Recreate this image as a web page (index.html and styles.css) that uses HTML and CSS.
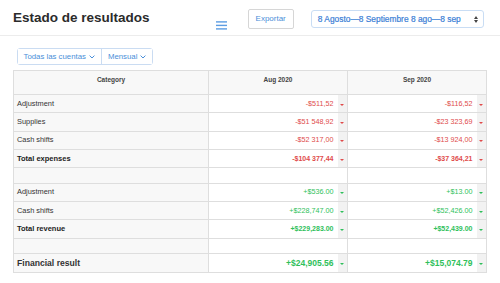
FILE: index.html
```html
<!DOCTYPE html>
<html lang="es">
<head>
<meta charset="utf-8">
<title>Estado de resultados</title>
<link rel="stylesheet" href="styles.css">
</head>
<body>
<header class="topbar">
  <h1 class="title">Estado de resultados</h1>
  <span class="menu" aria-label="menu">
    <svg width="11" height="9" viewBox="0 0 11 9"><rect x="0" y="0.2" width="11" height="1.4" fill="#5c9de3"/><rect x="0" y="3.7" width="11" height="1.4" fill="#5c9de3"/><rect x="0" y="7.2" width="11" height="1.4" fill="#5c9de3"/></svg>
  </span>
  <button class="export">Exportar</button>
  <div class="range">
    <span class="range-text">8 Agosto—8 Septiembre 8 ago—8 sep</span>
    <svg class="updown" width="4" height="7" viewBox="0 0 4 7"><path d="M0 3 L2 0 L4 3 Z M0 4 L2 7 L4 4 Z" fill="#444"/></svg>
  </div>
</header>

<div class="filters">
  <div class="btn-group">
    <button class="fbtn">Todas las cuentas <svg class="chev" width="6" height="4" viewBox="0 0 6 4"><path d="M0.6 0.6 L3 3 L5.4 0.6" fill="none" stroke="#4a8fd9" stroke-width="1"/></svg></button>
    <button class="fbtn">Mensual <svg class="chev" width="6" height="4" viewBox="0 0 6 4"><path d="M0.6 0.6 L3 3 L5.4 0.6" fill="none" stroke="#4a8fd9" stroke-width="1"/></svg></button>
  </div>
</div>

<table class="report">
  <colgroup>
    <col class="c-cat"><col class="c-val"><col class="c-car"><col class="c-val"><col class="c-car">
  </colgroup>
  <thead>
    <tr class="head">
      <th>Category</th>
      <th colspan="2">Aug 2020</th>
      <th colspan="2">Sep 2020</th>
    </tr>
  </thead>
  <tbody>
    <tr class="row">
      <td class="cat">Adjustment</td>
      <td class="val neg">-$511,52</td><td class="car"><i class="tri neg-t"></i></td>
      <td class="val neg">-$116,52</td><td class="car"><i class="tri neg-t"></i></td>
    </tr>
    <tr class="row">
      <td class="cat">Supplies</td>
      <td class="val neg">-$51 548,92</td><td class="car"><i class="tri neg-t"></i></td>
      <td class="val neg">-$23 323,69</td><td class="car"><i class="tri neg-t"></i></td>
    </tr>
    <tr class="row">
      <td class="cat">Cash shifts</td>
      <td class="val neg">-$52 317,00</td><td class="car"><i class="tri neg-t"></i></td>
      <td class="val neg">-$13 924,00</td><td class="car"><i class="tri neg-t"></i></td>
    </tr>
    <tr class="row total">
      <td class="cat">Total expenses</td>
      <td class="val neg">-$104 377,44</td><td class="car"><i class="tri neg-t"></i></td>
      <td class="val neg">-$37 364,21</td><td class="car"><i class="tri neg-t"></i></td>
    </tr>
    <tr class="blank">
      <td class="cat"></td><td colspan="2"></td><td colspan="2"></td>
    </tr>
    <tr class="row">
      <td class="cat">Adjustment</td>
      <td class="val pos">+$536.00</td><td class="car"><i class="tri pos-t"></i></td>
      <td class="val pos">+$13.00</td><td class="car"><i class="tri pos-t"></i></td>
    </tr>
    <tr class="row">
      <td class="cat">Cash shifts</td>
      <td class="val pos">+$228,747.00</td><td class="car"><i class="tri pos-t"></i></td>
      <td class="val pos">+$52,426.00</td><td class="car"><i class="tri pos-t"></i></td>
    </tr>
    <tr class="row total">
      <td class="cat">Total revenue</td>
      <td class="val pos">+$229,283.00</td><td class="car"><i class="tri pos-t"></i></td>
      <td class="val pos">+$52,439.00</td><td class="car"><i class="tri pos-t"></i></td>
    </tr>
    <tr class="blank">
      <td class="cat"></td><td colspan="2"></td><td colspan="2"></td>
    </tr>
    <tr class="result">
      <td class="cat">Financial result</td>
      <td class="val pos">+$24,905.56</td><td class="car"><i class="tri pos-t"></i></td>
      <td class="val pos">+$15,074.79</td><td class="car"><i class="tri pos-t"></i></td>
    </tr>
  </tbody>
</table>
</body>
</html>
```

FILE: styles.css
```css
* { box-sizing: border-box; }

body {
  margin: 0;
  width: 500px;
  height: 283px;
  overflow: hidden;
  background: #fff;
  color: #333;
  font-family: "Liberation Sans", Arial, sans-serif;
}

.topbar {
  display: flex;
  align-items: flex-start;
  height: 36px;
  padding: 9px 16px 0 13px;
  border-bottom: 1px solid #ececec;
}

.title {
  margin: 1px 0 0 0;
  font-size: 13.5px;
  line-height: 15.5px;
  font-weight: bold;
  color: #2b2b2b;
}

.menu {
  display: flex;
  margin: 12px 0 0 66px;
}

.export {
  margin: 0 0 0 21px;
  height: 19.5px;
  padding: 0 7px;
  border: 1px solid #d6d6d6;
  border-radius: 2px;
  background: #fff;
  color: #4a8fd9;
  font-family: "Liberation Sans", Arial, sans-serif;
  font-size: 8px;
}

.range {
  display: flex;
  align-items: center;
  justify-content: space-between;
  margin: 1px 0 0 17px;
  width: 173px;
  height: 18px;
  padding: 0 5px 0 6px;
  border: 1px solid #c9ddf4;
  border-radius: 3px;
  background: #fff;
}

.range-text {
  font-size: 8.4px;
  color: #3b80d6;
  white-space: nowrap;
  -webkit-text-stroke: 0.2px #3b80d6;
}

.updown { flex: none; }

.filters {
  padding: 9px 0 0 16.5px;
  height: 34px;
}

.btn-group {
  display: inline-flex;
  height: 17px;
  border: 1px solid #cadcf2;
  border-radius: 3px;
}

.fbtn {
  display: flex;
  align-items: center;
  gap: 3px;
  padding: 0 6px;
  border: none;
  background: #fff;
  color: #4a8fd9;
  font-family: "Liberation Sans", Arial, sans-serif;
  font-size: 7.8px;
}

.fbtn + .fbtn {
  border-left: 1px solid #cadcf2;
}

.chev { margin-top: 1px; }

.report {
  margin-left: 13px;
  width: 473px;
  border-collapse: collapse;
  table-layout: fixed;
}

.c-cat { width: 195px; }
.c-val { width: 129px; }
.c-car { width: 10px; }

.report th,
.report td {
  border: 1px solid #dedede;
  padding: 0;
}

.head th {
  height: 24px;
  vertical-align: top;
  padding-top: 5px;
  font-size: 6.5px;
  font-weight: bold;
  color: #444;
  background: #f8f8f8;
}

.cat {
  background: #f8f8f8;
  padding-left: 3px !important;
  padding-bottom: 1px !important;
  text-align: left;
  font-size: 7.4px;
  color: #333;
}

.row td { height: 18.3px; }
.blank td { height: 15.5px; }
.result td { height: 19px; }

.val {
  text-align: right;
  padding-right: 4px !important;
  padding-bottom: 1px !important;
  font-size: 7.2px;
  border-right-style: hidden !important;
}

.car {
  background: #f2f2f2;
  text-align: center;
  line-height: 0;
  padding-bottom: 1px !important;
}

.neg { color: #e04b4b; }
.pos { color: #2fbf5b; }

.total td.cat {
  font-weight: bold;
  font-size: 7.5px;
  color: #222;
}

.total td.val {
  font-weight: bold;
  font-size: 7px;
}

.result td.cat {
  font-size: 8.6px;
  font-weight: bold;
  color: #333;
}

.result td.val {
  font-size: 8.5px;
  font-weight: bold;
}

.tri {
  display: inline-block;
  width: 0;
  height: 0;
  border-left: 2px solid transparent;
  border-right: 2px solid transparent;
  border-top: 2.5px solid;
}

.neg-t { border-top-color: #e04b4b; }
.pos-t { border-top-color: #2fbf5b; }
```
